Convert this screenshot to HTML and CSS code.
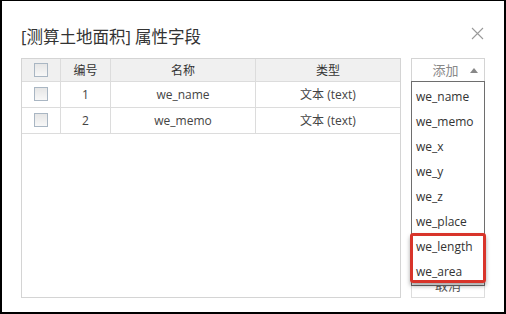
FILE: index.html
```html
<!DOCTYPE html>
<html>
    <head>
        <meta charset="utf-8">
        <title>属性字段</title>
        <link rel="stylesheet" href="styles.css">
    </head>
    <body>
        <div class="dialog">
            <div class="head">
                <h3 class="title">[测算土地面积] 属性字段</h3>
                <span class="close">
                    <svg width="13" height="13" viewBox="0 0 13 13"><path d="M1 1L12 12M12 1L1 12" stroke="#9a9a9a" stroke-width="1.1" fill="none"/></svg>
                </span>
            </div>

            <div class="main">
                <div class="grid">
                    <table>
                        <tr class="hdr">
                            <th class="c-chk"><span class="chk"></span></th>
                            <th class="c-no">编号</th>
                            <th class="c-name">名称</th>
                            <th class="c-type">类型</th>
                        </tr>
                        <tr>
                            <td><span class="chk"></span></td>
                            <td>1</td>
                            <td>we_name</td>
                            <td>文本 (text)</td>
                        </tr>
                        <tr>
                            <td><span class="chk"></span></td>
                            <td>2</td>
                            <td>we_memo</td>
                            <td>文本 (text)</td>
                        </tr>
                    </table>
                </div>

                <div class="side">
                    <div class="add">添加 <span class="caret"></span></div>
                    <ul class="menu">
                        <li>we_name</li>
                        <li>we_memo</li>
                        <li>we_x</li>
                        <li>we_y</li>
                        <li>we_z</li>
                        <li>we_place</li>
                        <li>we_length</li>
                        <li>we_area</li>
                    </ul>
                    <div class="mark"></div>
                    <div class="cancel">取消</div>
                </div>
            </div>
        </div>
    </body>
</html>
```

FILE: styles.css
```css
body {
    margin: 0;
    font-family: "Open Sans", "Noto Sans CJK SC", sans-serif;
    color: #333333;
}

.dialog {
    width: 506px;
    height: 314px;
    box-sizing: border-box;
    border: 2px solid #000000;
    border-top-width: 1px;
    padding: 0 19px;
    background: #FFFFFF;
}

.head {
    height: 44px;
    padding-top: 13px;
    display: flex;
    align-items: center;
    justify-content: space-between;
}

.title {
    margin: 0;
    font-size: 16.5px;
    font-weight: normal;
    color: #333333;
}

.close {
    display: flex;
    margin-right: 1px;
    margin-top: -6px;
}

.main {
    display: flex;
    gap: 10px;
}

.grid {
    width: 380px;
    height: 240px;
    box-sizing: border-box;
    border: 1px solid #D4D4D4;
}

table {
    width: 100%;
    border-collapse: collapse;
    font-size: 12px;
    color: #444444;
}

th, td {
    border: 1px solid #DCDCDC;
    text-align: center;
    padding: 0;
    font-weight: normal;
}

tr:first-child th {
    border-top: none;
}

th:first-child, td:first-child {
    border-left: none;
}

th:last-child, td:last-child {
    border-right: none;
}

.hdr {
    height: 22px;
    background: #F0F0F0;
    color: #333333;
}

td {
    height: 25px;
}

.c-chk {
    width: 38px;
}

.c-no {
    width: 49px;
}

.c-name {
    width: 144px;
}

.chk {
    display: inline-block;
    width: 12px;
    height: 12px;
    vertical-align: middle;
    border: 1px solid #A9B6C3;
    background: linear-gradient(#E6E6E6, #F8F8F8);
    margin-top: -2px;
}

.side {
    position: relative;
    width: 74px;
    height: 240px;
}

.add {
    height: 23px;
    box-sizing: border-box;
    border: 1px solid #D4D4D4;
    border-bottom: none;
    font-size: 13px;
    color: #888888;
    line-height: 22px;
    text-align: right;
    padding-right: 6px;
}

.caret {
    display: inline-block;
    width: 0;
    height: 0;
    margin-left: 8px;
    vertical-align: 2px;
    border-left: 4px solid transparent;
    border-right: 4px solid transparent;
    border-bottom: 5px solid #888888;
}

.menu {
    position: absolute;
    top: 23px;
    left: 0;
    width: 74px;
    box-sizing: border-box;
    margin: 0;
    padding: 2px 0 1px 0;
    list-style: none;
    border: 1px solid #6E6E6E;
    background: #FFFFFF;
    z-index: 2;
}

.menu li {
    height: 25px;
    line-height: 25px;
    padding-left: 4px;
    font-size: 12px;
    color: #333333;
}

.mark {
    position: absolute;
    left: -1px;
    top: 175px;
    width: 76px;
    height: 50px;
    box-sizing: border-box;
    border: 3px solid #D8342A;
    border-radius: 3px;
    box-shadow: 0 3px 4px rgba(0, 0, 0, 0.35);
    z-index: 3;
}

.cancel {
    position: absolute;
    left: 0;
    bottom: 0;
    width: 74px;
    height: 26px;
    box-sizing: border-box;
    border: 1px solid #DDDDDD;
    font-size: 13px;
    color: #555555;
    text-align: center;
    line-height: 24px;
}
```
